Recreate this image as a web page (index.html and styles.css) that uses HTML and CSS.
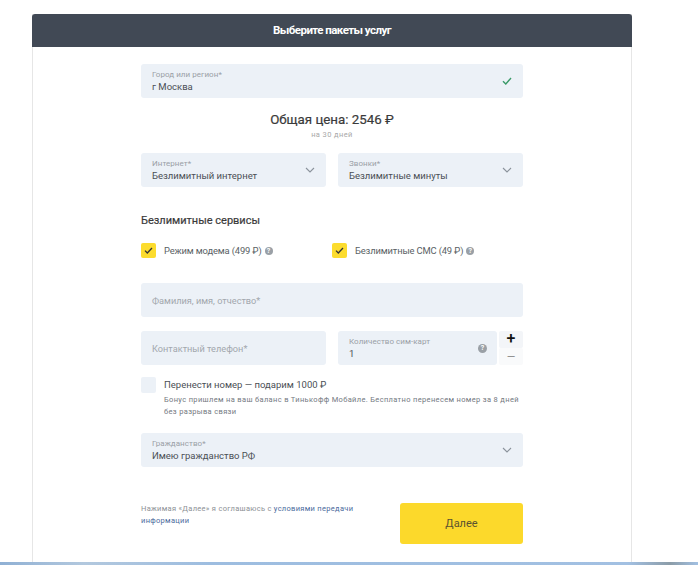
FILE: index.html
```html
<!DOCTYPE html>
<html lang="ru">
<head>
    <meta charset="UTF-8">
    <meta name="viewport" content="width=device-width, initial-scale=1.0">
    <title>Выберите пакеты услуг</title>
    <link rel="stylesheet" href="styles.css">
</head>
<body>
    <div class="page">
        <div class="card">
            <div class="card-header">Выберите пакеты услуг</div>
            <form class="form">
                <div class="field field-city">
                    <div class="field-text">
                        <span class="field-label">Город или регион*</span>
                        <span class="field-value">г Москва</span>
                    </div>
                    <svg class="icon-ok" width="10" height="8" viewBox="0 0 10 8"><path d="M1 4.2 L3.8 7 L9 1" fill="none" stroke="#3a9a68" stroke-width="1.4"/></svg>
                </div>

                <div class="price">Общая цена: 2546 ₽</div>
                <div class="price-note">на 30 дней</div>

                <div class="row row-selects">
                    <div class="field">
                        <div class="field-text">
                            <span class="field-label">Интернет*</span>
                            <span class="field-value">Безлимитный интернет</span>
                        </div>
                        <svg class="icon-arrow" width="10" height="6" viewBox="0 0 10 6"><path d="M1 1 L5 5 L9 1" fill="none" stroke="#8b939c" stroke-width="1.1"/></svg>
                    </div>
                    <div class="field">
                        <div class="field-text">
                            <span class="field-label">Звонки*</span>
                            <span class="field-value">Безлимитные минуты</span>
                        </div>
                        <svg class="icon-arrow" width="10" height="6" viewBox="0 0 10 6"><path d="M1 1 L5 5 L9 1" fill="none" stroke="#8b939c" stroke-width="1.1"/></svg>
                    </div>
                </div>

                <h3 class="services-title">Безлимитные сервисы</h3>

                <div class="services">
                    <div class="service service-first">
                        <span class="checkbox checkbox-on">
                            <svg width="9" height="7" viewBox="0 0 9 7"><path d="M1 3.6 L3.3 6 L8 1" fill="none" stroke="#333" stroke-width="1.3"/></svg>
                        </span>
                        <span class="service-name">Режим модема (499 ₽)</span>
                        <span class="hint">?</span>
                    </div>
                    <div class="service">
                        <span class="checkbox checkbox-on">
                            <svg width="9" height="7" viewBox="0 0 9 7"><path d="M1 3.6 L3.3 6 L8 1" fill="none" stroke="#333" stroke-width="1.3"/></svg>
                        </span>
                        <span class="service-name">Безлимитные СМС (49 ₽)</span>
                        <span class="hint">?</span>
                    </div>
                </div>

                <div class="field field-name">
                    <span class="field-placeholder">Фамилия, имя, отчество*</span>
                </div>

                <div class="row row-contact">
                    <div class="field">
                        <span class="field-placeholder">Контактный телефон*</span>
                    </div>
                    <div class="sim">
                        <div class="field sim-count">
                            <div class="field-text">
                                <span class="field-label">Количество сим-карт</span>
                                <span class="field-value">1</span>
                            </div>
                            <span class="hint hint-big">?</span>
                        </div>
                        <div class="stepper">
                            <span class="step step-plus">+</span>
                            <span class="step step-minus">—</span>
                        </div>
                    </div>
                </div>

                <div class="transfer">
                    <span class="checkbox checkbox-off"></span>
                    <div class="transfer-text">
                        <div class="transfer-title">Перенести номер — подарим 1000 ₽</div>
                        <div class="transfer-note">Бонус пришлем на ваш баланс в Тинькофф Мобайле. Бесплатно перенесем номер за 8 дней без разрыва связи</div>
                    </div>
                </div>

                <div class="field field-citizen">
                    <div class="field-text">
                        <span class="field-label">Гражданство*</span>
                        <span class="field-value">Имею гражданство РФ</span>
                    </div>
                    <svg class="icon-arrow" width="10" height="6" viewBox="0 0 10 6"><path d="M1 1 L5 5 L9 1" fill="none" stroke="#8b939c" stroke-width="1.1"/></svg>
                </div>

                <div class="footer">
                    <p class="terms">Нажимая «Далее» я соглашаюсь с <a href="#">условиями передачи</a><br><a href="#">информации</a></p>
                    <button type="button" class="next-button">Далее</button>
                </div>
            </form>
        </div>
        <div class="strip"></div>
    </div>
</body>
</html>
```

FILE: styles.css
```css
body {
    font-family: Roboto, "Liberation Sans", sans-serif;
    margin: 0;
    padding: 0;
    background-color: #fff;
    color: #333;
    overflow: hidden;
}

.page {
    height: 565px;
    display: flex;
    flex-direction: column;
}

.card {
    flex: 1;
    width: 600px;
    margin: 14px 0 0 32px;
    box-sizing: border-box;
    border-left: 1px solid #e6e6e6;
    border-right: 1px solid #e6e6e6;
    min-height: 0;
}

.card-header {
    height: 33px;
    margin: 0 -1px;
    background-color: #414955;
    border-radius: 3px 3px 0 0;
    color: #fff;
    font-size: 11.5px;
    font-weight: 700;
    line-height: 33px;
    text-align: center;
    letter-spacing: -0.55px;
}

.form {
    width: 382px;
    margin-left: 108px;
    padding-top: 17px;
}

.row {
    display: flex;
    gap: 12px;
}

.row > .field {
    width: 185px;
}

.field {
    height: 34px;
    box-sizing: border-box;
    padding: 0 11px;
    background-color: #ecf1f7;
    border-radius: 3px;
    display: flex;
    align-items: center;
    justify-content: space-between;
}

.field-text {
    display: flex;
    flex-direction: column;
}

.field-label {
    font-size: 8px;
    line-height: 10px;
    color: #9a9fa6;
    letter-spacing: 0.05px;
}

.field-value {
    font-size: 9.5px;
    line-height: 13px;
    color: #4a4f55;
}

.field-placeholder {
    font-size: 9.2px;
    color: #a2a7ad;
}

.price {
    margin-top: 14px;
    font-size: 13.3px;
    line-height: 16px;
    font-weight: 400;
    text-align: center;
    color: #3a3a3a;
    -webkit-text-stroke: 0.2px #3a3a3a;
}

.price-note {
    margin-top: 2px;
    font-size: 7.5px;
    line-height: 10px;
    text-align: center;
    color: #a8a8a8;
    letter-spacing: 0.4px;
}

.row-selects {
    margin-top: 13px;
}

.services-title {
    margin: 27px 0 0;
    font-size: 11px;
    line-height: 14px;
    font-weight: 400;
    color: #3a3a3a;
    -webkit-text-stroke: 0.2px #3a3a3a;
}

.services {
    display: flex;
    margin-top: 15px;
}

.service {
    display: flex;
    align-items: center;
}

.service-first {
    width: 191px;
}

.checkbox {
    width: 15px;
    height: 15px;
    border-radius: 2px;
    display: flex;
    align-items: center;
    justify-content: center;
    flex-shrink: 0;
}

.checkbox-on {
    background-color: #fcdc2e;
}

.checkbox-off {
    background-color: #ecf1f7;
    height: 16px;
}

.service-name {
    margin-left: 8px;
    font-size: 9.4px;
    color: #5a5f65;
    letter-spacing: -0.15px;
}

.hint {
    width: 8px;
    height: 8px;
    margin-left: 3px;
    border-radius: 50%;
    background-color: #9aa0a6;
    color: #fff;
    font-size: 7px;
    font-weight: 700;
    line-height: 8px;
    text-align: center;
}

.hint-big {
    width: 9px;
    height: 9px;
    line-height: 9px;
    margin-right: -1px;
}

.field-name {
    margin-top: 25px;
}

.row-contact {
    margin-top: 14px;
}

.sim {
    width: 185px;
    display: flex;
    justify-content: space-between;
}

.sim-count {
    width: 159px;
}

.stepper {
    width: 24px;
    display: flex;
    flex-direction: column;
    justify-content: space-between;
}

.step {
    height: 17px;
    background-color: #f3f5f8;
    border-radius: 2px;
    text-align: center;
}

.step-plus {
    font-size: 16px;
    font-weight: 500;
    line-height: 16px;
    color: #111;
}

.step-minus {
    background-color: #f9fafb;
    font-size: 11px;
    line-height: 17px;
    color: #888;
}

.transfer {
    display: flex;
    margin-top: 12px;
}

.transfer-text {
    margin-left: 8px;
}

.transfer-title {
    font-size: 9.5px;
    line-height: 16px;
    color: #4a4f55;
}

.transfer-note {
    margin-top: 1px;
    font-size: 7.5px;
    line-height: 12px;
    color: #74797f;
    letter-spacing: 0.34px;
}

.field-citizen {
    margin-top: 15px;
}

.footer {
    display: flex;
    justify-content: space-between;
    margin-top: 36px;
}

.terms {
    width: 225px;
    margin: 0;
    font-size: 7.5px;
    line-height: 12px;
    color: #8c9095;
    letter-spacing: 0.3px;
}

.terms a {
    color: #4a6a9c;
    text-decoration: none;
}

.next-button {
    width: 123px;
    height: 41px;
    background-color: #fcd92b;
    border: none;
    border-radius: 3px;
    font-family: inherit;
    font-size: 11px;
    color: #5a5230;
    cursor: pointer;
}

.strip {
    height: 3px;
    background: linear-gradient(90deg, #8fb0d4 0%, #b2c8de 12%, #9dbde0 30%, #a2c0e2 90%, #8b9ca8 96%, #a2c0e2 100%);
}
```
